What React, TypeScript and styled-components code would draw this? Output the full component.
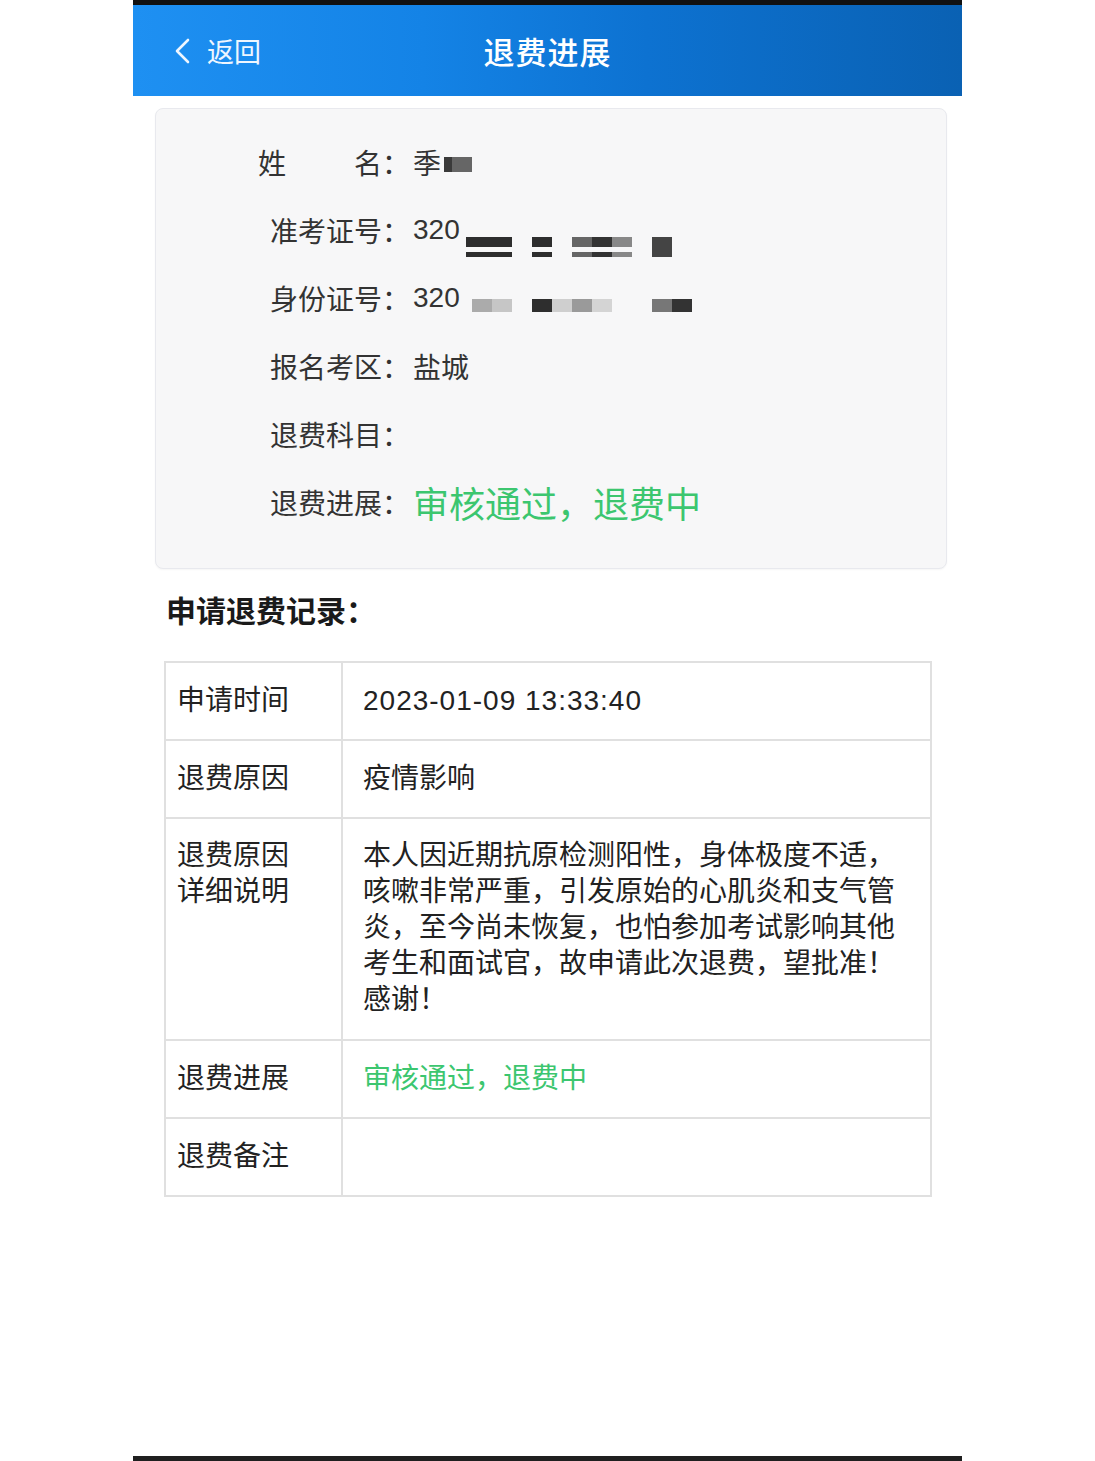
import React from 'react';
import styled, { createGlobalStyle } from 'styled-components';

const fontStack = `"Liberation Sans", "Noto Sans CJK SC", sans-serif`;
const green = '#3cc66f';
const ink = '#2b2b2b';
const line = '#e0e0e0';

const GlobalStyle = createGlobalStyle`
  html, body {
    margin: 0;
    padding: 0;
    background: #ffffff;
  }
  body {
    font-family: ${fontStack};
    color: ${ink};
  }
`;

// --- PAGE FRAME ---
const Screen = styled.div`
  width: 829px;
  min-height: 1461px;
  margin: 0 auto;
  box-sizing: border-box;
  display: flex;
  flex-direction: column;
  border-top: 5px solid #111111;
  border-bottom: 5px solid #1f1f1f;
  background: #ffffff;
`;

const Header = styled.header`
  height: 91px;
  display: grid;
  grid-template-columns: 1fr auto 1fr;
  align-items: center;
  background: linear-gradient(90deg, #1e90f2 0%, #1483e6 35%, #0d72d1 62%, #0a61b3 100%);
  color: #ffffff;
`;

const BackButton = styled.button`
  justify-self: start;
  display: flex;
  align-items: center;
  gap: 16px;
  margin-left: 40px;
  padding: 0;
  border: none;
  background: transparent;
  color: #eef6ff;
  font-family: ${fontStack};
  font-size: 27px;
  cursor: pointer;
`;

const Title = styled.h1`
  margin: 0;
  font-size: 31px;
  font-weight: 500;
  letter-spacing: 1px;
  color: #ffffff;
`;

// --- INFO CARD ---
const InfoCard = styled.section`
  margin: 12px 15px 0 22px;
  padding: 19px 0 32px 98px;
  background: #f7f7f8;
  border: 1px solid #e8e9ee;
  border-radius: 8px;
  box-shadow: 0 1px 2px rgba(0, 0, 0, 0.04);
`;

const InfoRow = styled.div`
  height: 68px;
  display: grid;
  grid-template-columns: 156px 1fr;
  align-items: center;
`;

const InfoLabel = styled.div<{ $spread?: boolean }>`
  display: flex;
  justify-content: ${(p) => (p.$spread ? 'space-between' : 'flex-end')};
  padding-left: ${(p) => (p.$spread ? '4px' : '0')};
  font-size: 28px;
  color: #333333;
  white-space: nowrap;
`;

const InfoValue = styled.div<{ $status?: boolean }>`
  display: flex;
  align-items: center;
  margin-left: 3px;
  font-size: ${(p) => (p.$status ? '36px' : '28px')};
  color: ${(p) => (p.$status ? green : '#333333')};
  white-space: nowrap;
`;

// redaction blocks over the personal numbers
const Mosaic = styled.span<{ $h: number; $shift: number; $gap: number }>`
  display: inline-flex;
  height: ${(p) => p.$h}px;
  margin-top: ${(p) => p.$shift}px;
  margin-left: ${(p) => p.$gap}px;
`;

const Block = styled.span<{ $w: number; $c: string; $striped?: boolean }>`
  width: ${(p) => p.$w}px;
  height: 100%;
  background: ${(p) =>
    p.$striped
      ? `linear-gradient(to bottom, ${p.$c} 0 10px, transparent 10px 15px, ${p.$c} 15px 100%)`
      : p.$c};
`;

// --- RECORD TABLE ---
const SectionTitle = styled.h2`
  margin: 23px 0 0 33px;
  font-size: 30px;
  line-height: 40px;
  font-weight: 700;
  color: #1a1a1a;
`;

const RecordTable = styled.table`
  margin: 29px 30px 0 31px;
  width: 768px;
  border-collapse: collapse;
  font-size: 28px;
`;

const Cell = styled.td<{ $head?: boolean; $tall?: boolean; $green?: boolean; $wide?: boolean }>`
  box-sizing: border-box;
  border: 2px solid ${line};
  height: ${(p) => (p.$tall ? '222px' : '78px')};
  width: ${(p) => (p.$head ? '177px' : 'auto')};
  padding: ${(p) => (p.$tall ? '19px 20px 21px' : '0 20px')};
  padding-left: ${(p) => (p.$head ? '11px' : '20px')};
  vertical-align: ${(p) => (p.$tall ? 'top' : 'middle')};
  line-height: 36px;
  letter-spacing: ${(p) => (p.$wide ? '1px' : '0')};
  color: ${(p) => (p.$green ? green : '#222222')};
`;

const ChevronLeft = () => (
  <svg width="18" height="26" viewBox="0 0 18 26" fill="none" stroke="currentColor" strokeWidth="2.6" strokeLinecap="round" strokeLinejoin="round">
    <polyline points="15,2 4,13 15,24" />
  </svg>
);

const examBlocks = [
  { gap: 6, parts: [{ w: 46, c: '#2e2e2e' }] },
  { gap: 20, parts: [{ w: 20, c: '#2e2e2e' }] },
  { gap: 20, parts: [{ w: 20, c: '#666666' }, { w: 20, c: '#333333' }, { w: 20, c: '#888888' }] },
];

const idBlocks = [
  { gap: 12, parts: [{ w: 20, c: '#ababab' }, { w: 20, c: '#c6c6c6' }] },
  { gap: 20, parts: [{ w: 20, c: '#2e2e2e' }, { w: 20, c: '#cfcfcf' }, { w: 20, c: '#9a9a9a' }, { w: 20, c: '#d4d4d4' }] },
  { gap: 40, parts: [{ w: 20, c: '#777777' }, { w: 20, c: '#333333' }] },
];

const records = [
  { label: ['申请时间'], value: '2023-01-09 13:33:40', wide: true },
  { label: ['退费原因'], value: '疫情影响' },
  {
    label: ['退费原因', '详细说明'],
    value: '本人因近期抗原检测阳性，身体极度不适，咳嗽非常严重，引发原始的心肌炎和支气管炎，至今尚未恢复，也怕参加考试影响其他考生和面试官，故申请此次退费，望批准！感谢！',
    tall: true,
  },
  { label: ['退费进展'], value: '审核通过，退费中', green: true },
  { label: ['退费备注'], value: '' },
];

const App: React.FC = () => {
  return (
    <>
      <GlobalStyle />
      <Screen>
        <Header>
          <BackButton>
            <ChevronLeft />
            返回
          </BackButton>
          <Title>退费进展</Title>
          <span />
        </Header>

        <InfoCard>
          <InfoRow>
            <InfoLabel $spread>
              <span>姓</span>
              <span>名：</span>
            </InfoLabel>
            <InfoValue>
              季
              <Mosaic $h={15} $shift={5} $gap={3}>
                <Block $w={8} $c="#3a3a3a" />
                <Block $w={20} $c="#666666" />
              </Mosaic>
            </InfoValue>
          </InfoRow>
          <InfoRow>
            <InfoLabel>准考证号：</InfoLabel>
            <InfoValue>
              320
              {examBlocks.map((g, i) => (
                <Mosaic key={i} $h={20} $shift={34} $gap={g.gap}>
                  {g.parts.map((b, j) => (
                    <Block key={j} $w={b.w} $c={b.c} $striped />
                  ))}
                </Mosaic>
              ))}
              <Mosaic $h={20} $shift={34} $gap={20}>
                <Block $w={20} $c="#444444" />
              </Mosaic>
            </InfoValue>
          </InfoRow>
          <InfoRow>
            <InfoLabel>身份证号：</InfoLabel>
            <InfoValue>
              320
              {idBlocks.map((g, i) => (
                <Mosaic key={i} $h={13} $shift={15} $gap={g.gap}>
                  {g.parts.map((b, j) => (
                    <Block key={j} $w={b.w} $c={b.c} />
                  ))}
                </Mosaic>
              ))}
            </InfoValue>
          </InfoRow>
          <InfoRow>
            <InfoLabel>报名考区：</InfoLabel>
            <InfoValue>盐城</InfoValue>
          </InfoRow>
          <InfoRow>
            <InfoLabel>退费科目：</InfoLabel>
            <InfoValue />
          </InfoRow>
          <InfoRow>
            <InfoLabel>退费进展：</InfoLabel>
            <InfoValue $status>审核通过，退费中</InfoValue>
          </InfoRow>
        </InfoCard>

        <SectionTitle>申请退费记录：</SectionTitle>

        <RecordTable>
          <tbody>
            {records.map((r) => (
              <tr key={r.label.join('')}>
                <Cell $head $tall={r.tall}>
                  {r.label.map((l) => (
                    <div key={l}>{l}</div>
                  ))}
                </Cell>
                <Cell $tall={r.tall} $green={r.green} $wide={r.wide}>
                  {r.value}
                </Cell>
              </tr>
            ))}
          </tbody>
        </RecordTable>
      </Screen>
    </>
  );
};

export default App;
